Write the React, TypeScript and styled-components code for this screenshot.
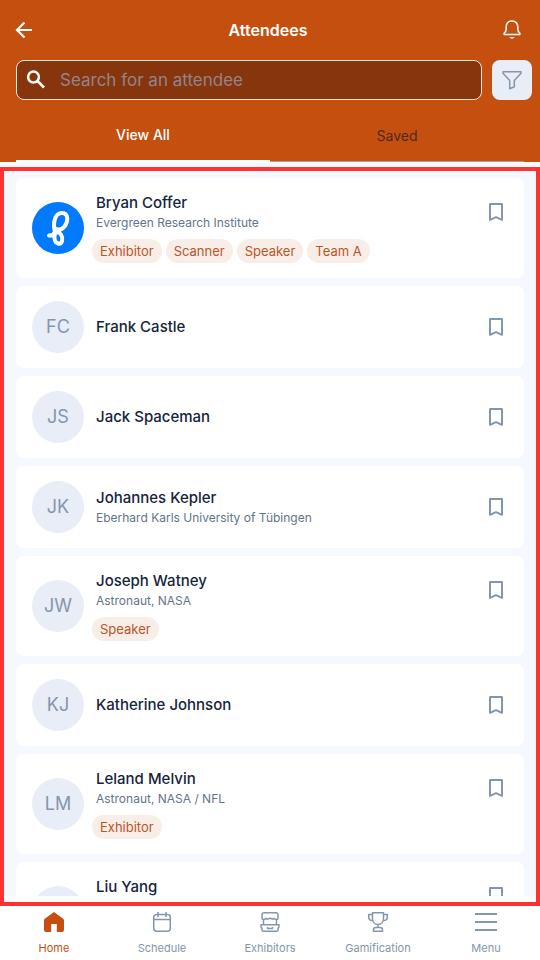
import React from 'react';
import styled, { createGlobalStyle } from 'styled-components';

const GlobalStyle = createGlobalStyle`
  *, *::before, *::after { box-sizing: border-box; }
  body {
    margin: 0;
    font-family: Inter, "Liberation Sans", sans-serif;
    background: #f5f9ff;
    color: #16243d;
  }
  button, input { font: inherit; }
  button { border: 0; padding: 0; background: none; cursor: pointer; }
  h1, h2, p, ul { margin: 0; padding: 0; }
  ul { list-style: none; }
`;

const Page = styled.div`
  display: flex;
  flex-direction: column;
  height: 100vh;
`;

const Header = styled.header`
  flex: none;
  background: #c54f0f;
  color: #fff;
`;

const TitleBar = styled.div`
  display: grid;
  grid-template-columns: 24px 1fr 24px;
  align-items: center;
  height: 60px;
  padding: 0 16px 0 12px;
`;

const Title = styled.h1`
  font-size: 16px;
  line-height: 24px;
  font-weight: 600;
  text-align: center;
`;

const IconButton = styled.button`
  display: grid;
  place-items: center;
  flex: none;
  width: 24px;
  height: 24px;
  color: inherit;
`;

const SearchRow = styled.form`
  display: flex;
  gap: 10px;
  padding: 0 8px 0 16px;
`;

const SearchField = styled.label`
  display: flex;
  flex: 1;
  align-items: center;
  gap: 12px;
  height: 40px;
  padding: 0 7px;
  border: 1px solid #f6e7df;
  border-radius: 8px;
  background: #87350c;
`;

const SearchInput = styled.input`
  flex: 1;
  min-width: 0;
  padding: 0;
  border: 0;
  outline: 0;
  background: transparent;
  color: #fff;
  font-size: 17px;
  line-height: 24px;
  &::placeholder { color: #94848a; opacity: 1; }
`;

const FilterButton = styled.button`
  display: grid;
  place-items: center;
  width: 40px;
  height: 40px;
  border-radius: 8px;
  background: #e8edf8;
  color: #8496ac;
`;

const Tabs = styled.div`
  display: grid;
  grid-template-columns: 1fr 1fr;
  height: 62px;
  padding: 9px 16px 0;
`;

const Tab = styled.button<{ $active?: boolean }>`
  border-bottom: ${({ $active }) => ($active ? '2px solid #fff' : '1px solid #b99a9a')};
  color: ${({ $active }) => ($active ? '#fff' : '#4f2a25')};
  font-size: 14px;
  font-weight: ${({ $active }) => ($active ? 500 : 400)};
`;

const ListArea = styled.main`
  position: relative;
  flex: 1;
  min-height: 0;
`;

const Highlight = styled.div`
  position: absolute;
  z-index: 2;
  inset: 5px 0 -10px;
  border: 4px solid #ff3131;
  pointer-events: none;
`;

const List = styled.ul`
  display: flex;
  flex-direction: column;
  gap: 8px;
  height: 100%;
  padding: 16px;
  overflow-y: auto;
  scrollbar-width: none;
`;

const Card = styled.li`
  display: flex;
  flex: none;
  align-items: center;
  gap: 12px;
  padding: 14px 16px 15px;
  border-radius: 8px;
  background: #fff;
`;

const Avatar = styled.div`
  display: grid;
  place-items: center;
  flex: none;
  width: 52px;
  height: 52px;
  border-radius: 50%;
  overflow: hidden;
  background: #e8edf8;
  color: #8496ac;
  font-size: 18px;
`;

const Details = styled.div`
  display: flex;
  flex: 1;
  flex-direction: column;
  justify-content: center;
  gap: 7px;
  min-width: 0;
  min-height: 53px;
`;

const Summary = styled.div`
  display: flex;
  align-items: center;
  justify-content: space-between;
`;

const Name = styled.h2`
  font-size: 15px;
  line-height: 22px;
  font-weight: 500;
`;

const Affiliation = styled.p`
  color: #64748b;
  font-size: 12px;
  line-height: 18px;
`;

const BookmarkButton = styled(IconButton)`
  color: #8496ac;
`;

const Tags = styled.div`
  display: flex;
  flex-wrap: wrap;
  gap: 4px;
  margin-left: -4px;
`;

const Tag = styled.span`
  padding: 0 8px;
  border-radius: 12px;
  background: #f9ede7;
  color: #b9552a;
  font-size: 13px;
  line-height: 24px;
`;

const Nav = styled.nav`
  display: grid;
  grid-template-columns: repeat(5, 1fr);
  flex: none;
  height: 64px;
  background: #fff;
`;

const NavLink = styled.a<{ $active?: boolean }>`
  display: flex;
  flex-direction: column;
  align-items: center;
  gap: 6px;
  padding-top: 14px;
  color: ${({ $active }) => ($active ? '#c54f0f' : '#8496ac')};
  font-size: 11px;
  line-height: 16px;
  text-decoration: none;
`;

const Svg = styled.svg`
  display: block;
  fill: none;
  stroke: currentColor;
  stroke-linejoin: round;
`;

const BackIcon = () => (
  <Svg width="24" height="24" viewBox="0 0 24 24" strokeWidth="2.2">
    <path d="M20 12H5.500M12.500 4.500 5 12l7.500 7.500" strokeLinejoin="miter" />
  </Svg>
);

const BellIcon = () => (
  <Svg width="24" height="24" viewBox="0 0 24 24" strokeWidth="1.500">
    <path d="M4.200 16.500h15.600v-1.300c-1.400-1-2-2.400-2-4.200V8.800C17.800 5.400 15.400 3 12 3S6.200 5.400 6.200 8.800V11c0 1.800-.6 3.200-2 4.200z" />
    <path d="M9.300 19.300c1.300 1.600 4.100 1.600 5.400 0z" fill="currentColor" stroke="none" />
  </Svg>
);

const SearchIcon = () => (
  <Svg width="24" height="24" viewBox="0 0 24 24" strokeWidth="2.500">
    <circle cx="9.500" cy="9" r="5.400" />
    <path d="m13.500 13 6.500 6.500" />
  </Svg>
);

const FilterIcon = () => (
  <Svg width="24" height="24" viewBox="0 0 24 24" strokeWidth="1.500">
    <path d="M3 3.700h18v1.600l-6.700 7.200v6.200l-4.600 2v-8.200L3 5.300z" />
  </Svg>
);

const BookmarkIcon = () => (
  <Svg width="24" height="24" viewBox="0 0 24 24" strokeWidth="2">
    <path d="M6 19.800V4h12v15.800l-6-2.600z" />
  </Svg>
);

const BrandMark = () => (
  <Svg width="52" height="52" viewBox="0 0 52 52" strokeWidth="4" strokeLinecap="round">
    <rect width="52" height="52" fill="#007bff" stroke="none" />
    <path
      stroke="#fff"
      d="M17 33.500c3 .5 5-1 6-4M23.500 31c-3-8-1.500-20 6.500-20 7 0 6 9 2.500 13.500-3 3.500-6 3.500-8 2.500-2.500 5-3.500 13 1.500 14.500 4.500 1 5.500-5 3-9-1.300-2-3.500-2.500-5.500-1.500"
    />
  </Svg>
);

const HomeIcon = () => (
  <Svg width="24" height="24" viewBox="0 0 24 24">
    <path
      d="M12 2 2.800 8.700Q2 9.300 2 10.500V20q0 2 2 2h5.200v-8h5.600v8H20q2 0 2-2v-9.500q0-1.200-.8-1.800z"
      fill="currentColor"
      stroke="none"
    />
  </Svg>
);

const CalendarIcon = () => (
  <Svg width="24" height="24" viewBox="0 0 24 24" strokeWidth="1.500">
    <rect x="3.700" y="4.500" width="16.600" height="16.800" rx="3" />
    <path d="M3.700 9.500h16.600M8 2v5M16 2v5" />
  </Svg>
);

const BoothIcon = () => (
  <Svg width="24" height="24" viewBox="0 0 24 24" strokeWidth="1.500">
    <path d="M6 2.700h12a2 2 0 0 1 2 2V8q0 1.500-1.500 1.500T16 8.500q-2 1.200-4-.5-2 1.700-4 .5-1 1-2.500 1T4 8V4.700a2 2 0 0 1 2-2zM5.500 9.500v5M18.500 9.500v5" />
    <path d="M3 14.700h18v1.800q0 1.500-1 1.500v2q0 1.300-1.500 1.300h-13Q4 21.300 4 20v-2q-1 0-1-1.500zM9.500 17v1.500h5V17" />
  </Svg>
);

const TrophyIcon = () => (
  <Svg width="24" height="24" viewBox="0 0 24 24" strokeWidth="1.500">
    <path d="M6.500 2.700h11v5.800c0 3.400-2.200 6-5.500 6s-5.500-2.600-5.500-6zM6.500 4.500H2.700v2.700c0 2 1.500 3.300 4 3.300M17.500 4.500h3.800v2.700c0 2-1.500 3.300-4 3.300M12 14.500v3M7.500 21.300v-1.500c0-1.200 1-2.300 2.300-2.300h4.400c1.300 0 2.300 1.100 2.300 2.300v1.500z" />
  </Svg>
);

const MenuIcon = () => (
  <Svg width="24" height="24" viewBox="0 0 24 24" strokeWidth="2">
    <path d="M1 4h22M1 12h22M1 20h22" />
  </Svg>
);

type Attendee = { name: string; initials?: string; affiliation?: string; tags?: string[] };

const attendees: Attendee[] = [
  {
    name: 'Bryan Coffer',
    affiliation: 'Evergreen Research Institute',
    tags: ['Exhibitor', 'Scanner', 'Speaker', 'Team A'],
  },
  { name: 'Frank Castle', initials: 'FC' },
  { name: 'Jack Spaceman', initials: 'JS' },
  { name: 'Johannes Kepler', initials: 'JK', affiliation: 'Eberhard Karls University of Tübingen' },
  { name: 'Joseph Watney', initials: 'JW', affiliation: 'Astronaut, NASA', tags: ['Speaker'] },
  { name: 'Katherine Johnson', initials: 'KJ' },
  { name: 'Leland Melvin', initials: 'LM', affiliation: 'Astronaut, NASA / NFL', tags: ['Exhibitor'] },
  { name: 'Liu Yang', initials: 'LY', affiliation: 'Astronaut, CNSA', tags: ['Speaker'] },
];

const navItems = [
  { label: 'Home', Icon: HomeIcon },
  { label: 'Schedule', Icon: CalendarIcon },
  { label: 'Exhibitors', Icon: BoothIcon },
  { label: 'Gamification', Icon: TrophyIcon },
  { label: 'Menu', Icon: MenuIcon },
];

const AttendeeCard = ({ name, initials, affiliation, tags }: Attendee) => (
  <Card>
    <Avatar>{initials ?? <BrandMark />}</Avatar>
    <Details>
      <Summary>
        <div>
          <Name>{name}</Name>
          {affiliation && <Affiliation>{affiliation}</Affiliation>}
        </div>
        <BookmarkButton type="button" aria-label={`Save ${name}`}>
          <BookmarkIcon />
        </BookmarkButton>
      </Summary>
      {tags && (
        <Tags>
          {tags.map((tag) => (
            <Tag key={tag}>{tag}</Tag>
          ))}
        </Tags>
      )}
    </Details>
  </Card>
);

export default function App() {
  return (
    <>
      <GlobalStyle />
      <Page>
        <Header>
          <TitleBar>
            <IconButton type="button" aria-label="Back">
              <BackIcon />
            </IconButton>
            <Title>Attendees</Title>
            <IconButton type="button" aria-label="Notifications">
              <BellIcon />
            </IconButton>
          </TitleBar>
          <SearchRow role="search" onSubmit={(event) => event.preventDefault()}>
            <SearchField>
              <SearchIcon />
              <SearchInput type="text" aria-label="Search for an attendee" placeholder="Search for an attendee" />
            </SearchField>
            <FilterButton type="button" aria-label="Filter">
              <FilterIcon />
            </FilterButton>
          </SearchRow>
          <Tabs role="tablist">
            <Tab type="button" role="tab" aria-selected="true" $active>
              View All
            </Tab>
            <Tab type="button" role="tab" aria-selected="false">
              Saved
            </Tab>
          </Tabs>
        </Header>
        <ListArea>
          <List>
            {attendees.map((attendee) => (
              <AttendeeCard key={attendee.name} {...attendee} />
            ))}
          </List>
          <Highlight />
        </ListArea>
        <Nav aria-label="Main">
          {navItems.map(({ label, Icon }, index) => (
            <NavLink key={label} href="#" $active={index === 0}>
              <Icon />
              {label}
            </NavLink>
          ))}
        </Nav>
      </Page>
    </>
  );
}
